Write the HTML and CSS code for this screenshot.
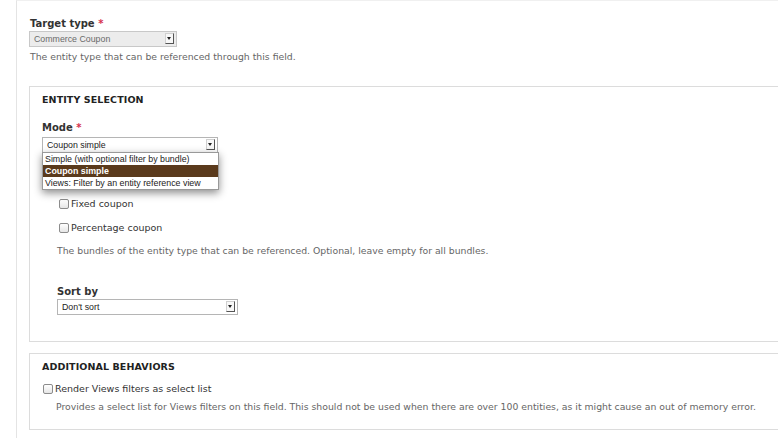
FILE: index.html
```html
<!DOCTYPE html>
<html>
<head>
<meta charset="utf-8">
<link rel="stylesheet" href="styles.css">
</head>
<body>
<div class="page">
  <div class="field top-field">
    <div class="label">Target type <span class="req">*</span></div>
    <div class="select disabled sel-target"><span class="val">Commerce Coupon</span><span class="arrow"></span></div>
    <div class="desc">The entity type that can be referenced through this field.</div>
  </div>

  <div class="fieldset entity">
    <div class="legend">ENTITY SELECTION</div>
    <div class="label">Mode <span class="req">*</span></div>
    <div class="select-wrap">
      <div class="select sel-mode"><span class="val">Coupon simple</span><span class="arrow"></span></div>
      <ul class="dropdown">
        <li>Simple (with optional filter by bundle)</li>
        <li class="active">Coupon simple</li>
        <li>Views: Filter by an entity reference view</li>
      </ul>
    </div>
    <div class="bundles">
      <div class="check"><span class="box"></span><span>Fixed coupon</span></div>
      <div class="check"><span class="box"></span><span>Percentage coupon</span></div>
      <div class="desc">The bundles of the entity type that can be referenced. Optional, leave empty for all bundles.</div>
    </div>
    <div class="sort">
      <div class="label">Sort by</div>
      <div class="select sel-sort"><span class="val">Don't sort</span><span class="arrow"></span></div>
    </div>
  </div>

  <div class="fieldset additional">
    <div class="legend">ADDITIONAL BEHAVIORS</div>
    <div class="check"><span class="box"></span><span>Render Views filters as select list</span></div>
    <div class="desc sub">Provides a select list for Views filters on this field. This should not be used when there are over 100 entities, as it might cause an out of memory error.</div>
  </div>
</div>
</body>
</html>
```

FILE: styles.css
```css
html, body {
  margin: 0;
  padding: 0;
  background: #fff;
  overflow: hidden;
}
body {
  width: 778px;
  height: 438px;
  font-family: "DejaVu Sans", Verdana, sans-serif;
  color: #333;
}
.page {
  margin-left: 16px;
  border-left: 1px solid #e4e4e4;
  border-top: 1px solid #f0f0f0;
  padding: 16px 0 0 12px;
  height: 438px;
  box-sizing: border-box;
}
.label {
  font-size: 10px;
  font-weight: bold;
  line-height: 14px;
  color: #333;
}
.req { color: #d6304f; }
.top-field { padding-left: 1px; }
.desc {
  font-size: 9.3px;
  line-height: 14px;
  color: #666;
}
.top-field .desc { margin-top: 3px; }

.select {
  position: relative;
  height: 16px;
  box-sizing: border-box;
  border: 1px solid #b5b5b5;
  background: #fff;
  font-family: "Liberation Sans", Arial, sans-serif;
  font-size: 8.8px;
  line-height: 14px;
  color: #222;
  padding-left: 4px;
  margin-top: 2px;
}
.select.disabled {
  background: #ececec;
  color: #6a6a6a;
  border-color: #c8c8c8;
}
.sel-target { width: 148px; margin-left: -1px; margin-top: 0; }
.sel-mode { width: 176px; }
.sel-sort { width: 181px; margin-top: 0; }
.arrow {
  position: absolute;
  right: 2px;
  top: 1px;
  width: 9px;
  height: 11px;
  box-sizing: border-box;
  border: 1px solid #d0d0d0;
  border-right-color: #555;
  border-bottom-color: #555;
  background: #f8f8f8;
}
.arrow::after {
  content: "";
  position: absolute;
  left: 1px;
  top: 3px;
  border-left: 2.5px solid transparent;
  border-right: 2.5px solid transparent;
  border-top: 3px solid #222;
}

.fieldset {
  border: 1px solid #dcdcdc;
  margin-right: -40px;
  padding: 6px 12px 0 12px;
}
.entity {
  margin-top: 22px;
  height: 256px;
  box-sizing: border-box;
}
.additional {
  margin-top: 11px;
  padding-top: 6px;
  height: 77px;
  box-sizing: border-box;
}
.legend {
  font-size: 9.5px;
  font-weight: bold;
  line-height: 14px;
  color: #222;
  letter-spacing: 0.1px;
}
.entity .legend + .label { margin-top: 14px; }

.select-wrap { position: relative; }
.dropdown {
  position: absolute;
  left: 0;
  top: 15px;
  width: 177px;
  box-sizing: border-box;
  margin: 0;
  padding: 0;
  list-style: none;
  background: #fff;
  border: 1px solid #999;
  box-shadow: 0 3px 8px rgba(0,0,0,0.45);
  font-family: "Liberation Sans", Arial, sans-serif;
  font-size: 8.85px;
  line-height: 12px;
  color: #222;
  z-index: 2;
}
.dropdown li { padding-left: 2px; height: 12px; }
.dropdown li.active {
  background: #5a3a1c;
  color: #fff;
  font-weight: bold;
}

.bundles { margin-left: 15px; margin-top: 44px; }
.check {
  display: flex;
  align-items: center;
  font-size: 9.5px;
  line-height: 14px;
  color: #333;
  margin-bottom: 10px;
}
.bundles .check { margin-left: 2px; }
.box {
  width: 10px;
  height: 10px;
  box-sizing: border-box;
  border: 1px solid #8c8c8c;
  border-radius: 2px;
  background: linear-gradient(#fff, #e6e6e6);
  margin-right: 2px;
  flex: none;
}
.bundles .desc { margin-top: -1px; }
.sort { margin-left: 15px; margin-top: 27px; }

.additional .legend { margin-bottom: 8px; }
.additional .check { margin-left: 1px; margin-bottom: 4px; }
.desc.sub { margin-left: 14px; }
```
